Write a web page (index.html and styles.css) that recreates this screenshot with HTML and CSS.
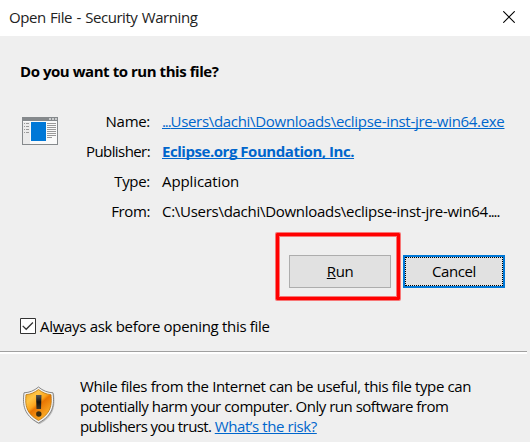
FILE: index.html
```html
<!DOCTYPE html>
<html lang="en">
<head>
<meta charset="utf-8">
<title>Open File - Security Warning</title>
<link rel="stylesheet" href="styles.css">
</head>
<body>
<div class="dialog">
  <header class="titlebar">
    <span class="title">Open File - Security Warning</span>
    <svg class="close" width="12" height="12" viewBox="0 0 12 12"><path d="M.3 .3 11.7 11.7M11.7 .3 .3 11.7" stroke="#000" stroke-width="1.1"/></svg>
  </header>
  <main class="content">
    <h1 class="question">Do you want to run this file?</h1>
    <section class="file">
      <svg class="app-icon" width="36" height="28" viewBox="0 0 36 28" shape-rendering="crispEdges">
        <path fill="#85898c" d="M0 0h36v28H0z"/>
        <path fill="#fafafa" d="M1 4h34v23H1z"/>
        <path fill="#ebebeb" d="M1 5h7v22H1z"/>
        <path fill="#c9cbcc" d="M27 1h2v2h-2zM30 1h2v2h-2zM33 1h2v2h-2z"/>
        <path fill="#0078d7" d="M9 5h15v19H9z"/>
        <path fill="#999" d="M2 6h1v1H2zM4 6h3v1H4zM2 9h1v1H2zM4 9h3v1H4zM2 12h1v1H2zM4 12h3v1H4zM2 15h1v1H2zM4 15h3v1H4zM25 6h9v1h-9zM25 8h9v1h-9zM25 10h9v1h-9zM25 12h9v1h-9zM25 14h9v1h-9zM25 16h9v1h-9zM25 18h9v1h-9zM25 20h5v1h-5z"/>
      </svg>
      <dl class="details">
        <dt class="k-name">Name:</dt><dd><a class="link path-link"><span class="dots">...</span>Users\dachi\Downloads\eclipse-inst-jre-win64.exe</a></dd>
        <dt class="k-publisher">Publisher:</dt><dd><a class="link publisher">Eclipse.org Foundation, Inc.</a></dd>
        <dt class="k-type">Type:</dt><dd class="type">Application</dd>
        <dt class="k-from">From:</dt><dd class="from">C:\Users\dachi\Downloads\eclipse-inst-jre-win64<span class="dots">....</span></dd>
      </dl>
    </section>
    <div class="actions">
      <div class="run-wrap"><button class="btn"><span class="key">R</span>un</button><span class="highlight"></span></div>
      <button class="btn focused">Cancel</button>
    </div>
    <label class="always">
      <svg width="16" height="16" viewBox="0 0 16 16"><path fill="#fff" stroke="#333" d="M.5 .5h15v15H.5z"/><path d="M2.7 7.9 6.2 11.3 12.9 4.5" fill="none" stroke="#333" stroke-width="1.3"/></svg>
      <span class="always-text">Al<span class="key">w</span>ays ask before opening this file</span>
    </label>
  </main>
  <footer class="notice">
    <svg class="shield" width="34" height="40" viewBox="0 0 34 40">
      <defs>
        <linearGradient id="gold" x1="0" y1="0" x2=".7" y2="1"><stop offset="0" stop-color="#e9a21c"/><stop offset=".3" stop-color="#ffc445"/><stop offset=".5" stop-color="#fba31c"/><stop offset=".58" stop-color="#e87503"/><stop offset="1" stop-color="#ffb52b"/></linearGradient>
        <linearGradient id="mark" x1="0" y1="0" x2="0" y2="1"><stop offset="0" stop-color="#555"/><stop offset=".5" stop-color="#111"/><stop offset="1" stop-color="#3b3526"/></linearGradient>
      </defs>
      <path d="M17.5 2C13 5.8 8 7.6 3 7.8c-1.5 12-.5 22.500 14.500 30.500C32.500 30.300 33.500 19.800 32 7.800 27 7.600 22 5.800 17.500 2z" fill="#aaa" opacity=".7"/>
      <path d="M16.500 1C12 4.800 7.500 6.500 2 6.800.5 18.500 1.500 29 16.500 37 31.500 29 32.500 18.500 31 6.800 25.500 6.500 21 4.800 16.500 1z" fill="#f4f4f4" stroke="#7a7a7a" stroke-width=".9"/>
      <path d="M16.500 3.500C12.500 6.600 8.500 8.300 4 8.700 3 19 4 27.500 16.500 34.500 29 27.500 30 19 29 8.700 24.500 8.300 20.500 6.600 16.500 3.500z" fill="url(#gold)" stroke="#b8740c" stroke-width=".8"/>
      <path d="M14 9h5.500l-.5 14h-4.500z" fill="url(#mark)"/>
      <circle cx="16.800" cy="28" r="2.700" fill="#3a2c12"/>
    </svg>
    <p class="warning"><span class="line l1">While files from the Internet can be useful, this file type can</span><span class="line l2">potentially harm your computer. Only run software from</span><span class="line"><span class="l3">publishers you trust. </span><a class="link risk">What’s the risk?</a></span></p>
  </footer>
</div>
</body>
</html>
```
FILE: styles.css
```css
* { box-sizing: border-box; }
body {
  margin: 0;
  background: #f0f0f0;
  color: #000;
  font: 15px/20px "Open Sans", "Noto Sans", sans-serif;
}
.dialog { width: 530px; height: 442px; overflow: hidden; background: #efefef; white-space: nowrap; }
.titlebar {
  display: flex;
  justify-content: space-between;
  align-items: flex-start;
  height: 36px;
  padding: 7px 15px 0 9px;
  background: #fff;
}
.title { color: #222; letter-spacing: -.44px; word-spacing: .9px; }
.close { margin-top: 4px; }
.content { height: 315px; padding: 25px 20px 0; }
.question { margin: 0; font-size: 15px; line-height: 20px; font-weight: 700; letter-spacing: -.45px; }
.file { display: flex; margin: 30px 0 0 2px; }
.app-icon { margin-top: 6px; }
.details {
  display: grid;
  grid-template-columns: 92px 1fr;
  grid-auto-rows: 20px;
  row-gap: 10px;
  column-gap: 12px;
  margin: 0;
}
dt { text-align: right; }
dd { margin: 0; }
.k-name { letter-spacing: -.3px; }
.k-publisher { letter-spacing: -.58px; }
.k-type { letter-spacing: -.3px; }
.k-from { letter-spacing: -.4px; }
.link { color: #0066cc; text-decoration: underline 1px; text-underline-offset: 1px; text-decoration-skip-ink: none; }
.path-link { letter-spacing: -.31px; }
.dots { letter-spacing: -1.1px; }
.publisher { font-weight: 700; letter-spacing: -.457px; }
.type { letter-spacing: -.1px; }
.from { letter-spacing: -.28px; }
.actions { display: flex; justify-content: flex-end; gap: 12px; margin: 34px 5px 0 0; }
.run-wrap { position: relative; }
.btn {
  display: block;
  width: 102px;
  height: 33px;
  padding: 0 0 1px;
  border: 1px solid #adadad;
  background: #e1e1e1;
  color: #000;
  font: inherit;
  letter-spacing: -.4px;
}
.focused { border: 2px solid #0078d7; outline: 1px dotted #000; outline-offset: -3px; }
.highlight {
  position: absolute;
  inset: -22px -9px -12px -13px;
  border: 3px solid #f00;
  border-radius: 1px;
  box-shadow: 0 0 0 1px rgba(255, 0, 0, .5), inset 0 0 0 1px rgba(255, 0, 0, .5);
}
.key { text-decoration: underline 1px; text-underline-offset: 1px; text-decoration-skip-ink: none; }
.always { display: flex; gap: 4px; margin-top: 28px; }
.always svg { margin-top: 2px; }
.always-text { letter-spacing: -.31px; }
.notice { position: relative; display: flex; padding: 25px 0 0 22px; }
.notice::before {
  content: "";
  position: absolute;
  top: 0;
  left: 0;
  width: 527px;
  height: 2px;
  border-top: 1px solid #a0a0a0;
  background: #fff;
}
.shield { margin-top: 10px; }
.warning { margin: 0 0 0 24px; }
.line { display: block; }
.l1 { letter-spacing: -.365px; }
.l2 { letter-spacing: -.485px; }
.l3 { letter-spacing: -.59px; }
.risk { letter-spacing: -.41px; }
```
